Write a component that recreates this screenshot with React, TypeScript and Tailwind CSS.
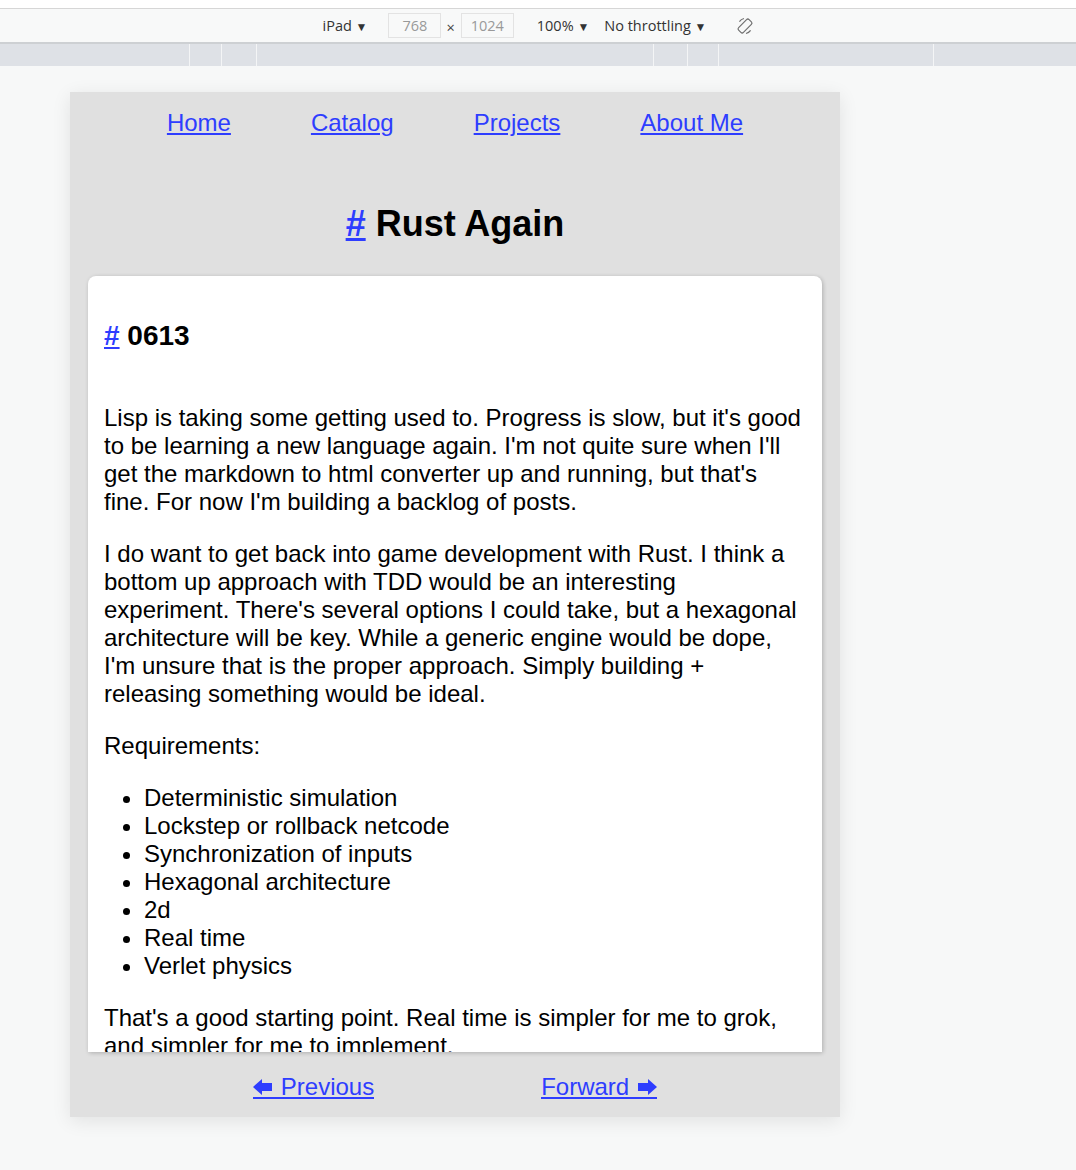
import React from "react";

const navLinks = ["Home", "Catalog", "Projects", "About Me"];

const requirements = [
    "Deterministic simulation",
    "Lockstep or rollback netcode",
    "Synchronization of inputs",
    "Hexagonal architecture",
    "2d",
    "Real time",
    "Verlet physics",
];

// widths of the media query bar segments, between the thin white marks
const rulerSegments = [189, 31, 34, 396, 33, 30, 214];

const RotateIcon: React.FC = () => (
    <svg width="18" height="18" viewBox="0 0 18 18" fill="none" stroke="#707070" strokeWidth="1.2">
        <path d="M3.4 4.6 A7.5 7.5 0 0 1 8 1.5" />
        <path d="M14.6 13.4 A7.5 7.5 0 0 1 10 16.5" />
        <rect x="5.6" y="1.6" width="6.8" height="14.8" rx="1.8" transform="rotate(45 9 9)" />
    </svg>
);

const LeftArrow: React.FC = () => (
    <svg width="19" height="16" viewBox="0 0 19 16" fill="#2e3dff">
        <path d="M0 8 L9 0 L9 4 L19 4 L19 12 L9 12 L9 16 Z" />
    </svg>
);

const RightArrow: React.FC = () => (
    <svg width="19" height="16" viewBox="0 0 19 16" fill="#2e3dff">
        <path d="M19 8 L10 0 L10 4 L0 4 L0 12 L10 12 L10 16 Z" />
    </svg>
);

const DeviceToolbar: React.FC = () => {
    return (
        <div className="font-['Open_Sans',sans-serif] text-[14.5px] text-[#333]">
            <div className="h-[9px] bg-white border-b border-[#d6d6d6]" />
            <div className="h-[35px] bg-[#f8f9f9] border-b-2 border-[#cdd0d3] flex items-center justify-center">
                <span>iPad <span className="text-[12px]">▼</span></span>
                <div className="ml-[21px] w-[53px] h-[25px] border border-[#e3e3e3] bg-[#f8f9f9] flex items-center justify-center text-[#999]">768</div>
                <span className="ml-[5px] mr-[6px] mt-[4px] text-[#444]">×</span>
                <div className="w-[53px] h-[25px] border border-[#e3e3e3] bg-[#f8f9f9] flex items-center justify-center text-[#999]">1024</div>
                <span className="ml-[23px]">100% <span className="text-[12px]">▼</span></span>
                <span className="ml-[15px]">No throttling <span className="text-[12px]">▼</span></span>
                <span className="ml-[29px] flex items-center"><RotateIcon /></span>
            </div>
            <div className="h-[22px] bg-[#dee1e6] flex">
                {rulerSegments.map((w, i) => (
                    <div key={i} className="h-full flex shrink-0" style={{ width: w + 1 }}>
                        <div className="flex-1" />
                        <div className="w-px bg-[#f4f5f6]" />
                    </div>
                ))}
            </div>
        </div>
    );
};

const App: React.FC = () => {
    return (
        <div className="min-h-[1170px] bg-[#f7f8f8] font-['Liberation_Sans',Arial,sans-serif] text-black">
            <DeviceToolbar />
            <div className="pt-[26px] pl-[70px]">
                <div className="w-[770px] bg-[#e0e0e0] shadow-[0_4px_18px_rgba(0,0,0,0.09)]">
                    <nav className="pt-[17px] flex justify-center gap-[80px] text-[24px] leading-[28px]">
                        {navLinks.map(link => (
                            <a key={link} href="#" className="text-[#2e3dff] underline">{link}</a>
                        ))}
                    </nav>
                    <h1 className="mt-[66px] text-center text-[36px] leading-[41px] font-bold">
                        <a href="#" className="text-[#2e3dff] underline">#</a> Rust Again
                    </h1>
                    <div className="mt-[32px] mx-[18px] h-[776px] overflow-hidden bg-white rounded-t-[8px] shadow-[1px_1px_4px_rgba(0,0,0,0.22)] px-4 text-[24px] leading-[28px]">
                        <h3 className="mt-[44px] text-[28px] leading-[32px] font-bold">
                            <a href="#" className="text-[#2e3dff] underline">#</a> 0613
                        </h3>
                        <p className="mt-[52px]">
                            Lisp is taking some getting used to. Progress is slow, but it's good to be learning a new language again. I'm not quite sure when I'll get the markdown to html converter up and running, but that's fine. For now I'm building a backlog of posts.
                        </p>
                        <p className="mt-6">
                            I do want to get back into game development with Rust. I think a bottom up approach with TDD would be an interesting experiment. There's several options I could take, but a hexagonal architecture will be key. While a generic engine would be dope, I'm unsure that is the proper approach. Simply building + releasing something would be ideal.
                        </p>
                        <p className="mt-6">Requirements:</p>
                        <ul className="mt-6 pl-10 list-disc">
                            {requirements.map(item => (
                                <li key={item}>{item}</li>
                            ))}
                        </ul>
                        <p className="mt-6">
                            That's a good starting point. Real time is simpler for me to grok, and simpler for me to implement.
                        </p>
                    </div>
                    <div className="pt-[24px] pb-[18px] flex justify-center gap-[167px] text-[24px] leading-[21px]">
                        <a href="#" className="inline-flex items-baseline gap-[9px] text-[#2e3dff] border-b-2 border-[#2e3dff]">
                            <LeftArrow /> <span>Previous</span>
                        </a>
                        <a href="#" className="inline-flex items-baseline gap-[9px] text-[#2e3dff] border-b-2 border-[#2e3dff]">
                            <span>Forward</span> <RightArrow />
                        </a>
                    </div>
                </div>
            </div>
        </div>
    );
};

export default App;
